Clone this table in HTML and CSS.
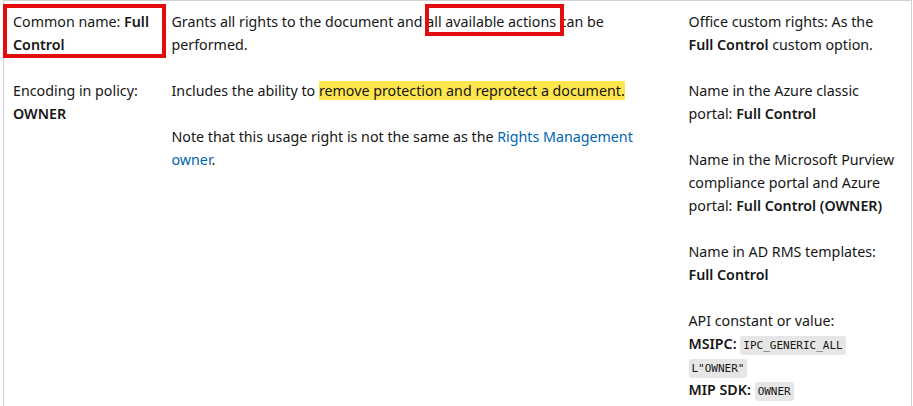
FILE: index.html
```html
<!DOCTYPE html>
<html>
<head>
<meta charset="utf-8">
<link rel="stylesheet" href="styles.css">
</head>
<body>
<div class="wrap">
<table class="rights">
<colgroup><col class="c1"><col class="c2"><col class="c3"></colgroup>
<tr>
<td>
<p>Common name: <strong>Full Control</strong></p>
<p>Encoding in policy: <strong>OWNER</strong></p>
</td>
<td>
<p>Grants all rights to the document and all available actions can be performed.</p>
<p>Includes the ability to <mark>remove protection and reprotect a document.</mark></p>
<p>Note that this usage right is not the same as the <a href="#">Rights Management owner</a>.</p>
</td>
<td>
<p>Office custom rights: As the <strong>Full Control</strong> custom option.</p>
<p>Name in the Azure classic portal: <strong>Full Control</strong></p>
<p>Name in the Microsoft Purview compliance portal and Azure portal: <strong>Full Control (OWNER)</strong></p>
<p>Name in AD RMS templates: <strong>Full Control</strong></p>
<p>API constant or value:<br><strong>MSIPC:</strong> <code>IPC_GENERIC_ALL</code><br><code>L"OWNER"</code><br><strong>MIP SDK:</strong> <code>OWNER</code></p>
</td>
</tr>
</table>
<div class="callout callout-a"></div>
<div class="callout callout-b"></div>
</div>
</body>
</html>
```
FILE: styles.css
```css
html, body {
  margin: 0;
  padding: 0;
  background: #fff;
}
body {
  font-family: "Segoe UI", "Noto Sans", sans-serif;
  font-size: 14.25px;
  color: #161616;
}
.wrap {
  position: relative;
  padding-left: 3px;
}
.rights {
  border-collapse: collapse;
  table-layout: fixed;
  width: 908px;
  border: 1px solid #d1d1d1;
  border-bottom: none;
}
.c1 { width: 158px; }
.c2 { width: 517px; }
.c3 { width: 233px; }
.rights td {
  vertical-align: top;
  padding: 9px 10px 0 9px;
  line-height: 23px;
}
.rights td:nth-child(2) {
  padding-left: 10px;
}
.rights td:nth-child(3) {
  padding-left: 10px;
  padding-right: 13px;
}
.rights p {
  margin: 0 0 23px 0;
}
.rights strong {
  font-weight: 600;
}
mark {
  background: #fde74c;
  color: #161616;
}
a {
  color: #0065b3;
  text-decoration: none;
}
code {
  font-family: "DejaVu Sans Mono", "Liberation Mono", monospace;
  font-size: 11px;
  line-height: 14px;
  background: #e6e6e6;
  padding: 3px 3px;
  border-radius: 3px;
  color: #161616;
}
.callout {
  position: absolute;
  border: 4px solid #e30d0d;
  box-sizing: border-box;
}
.callout-a {
  left: 3px;
  top: 4px;
  width: 163px;
  height: 54px;
}
.callout-b {
  left: 425px;
  top: 4px;
  width: 139px;
  height: 32px;
}
```
